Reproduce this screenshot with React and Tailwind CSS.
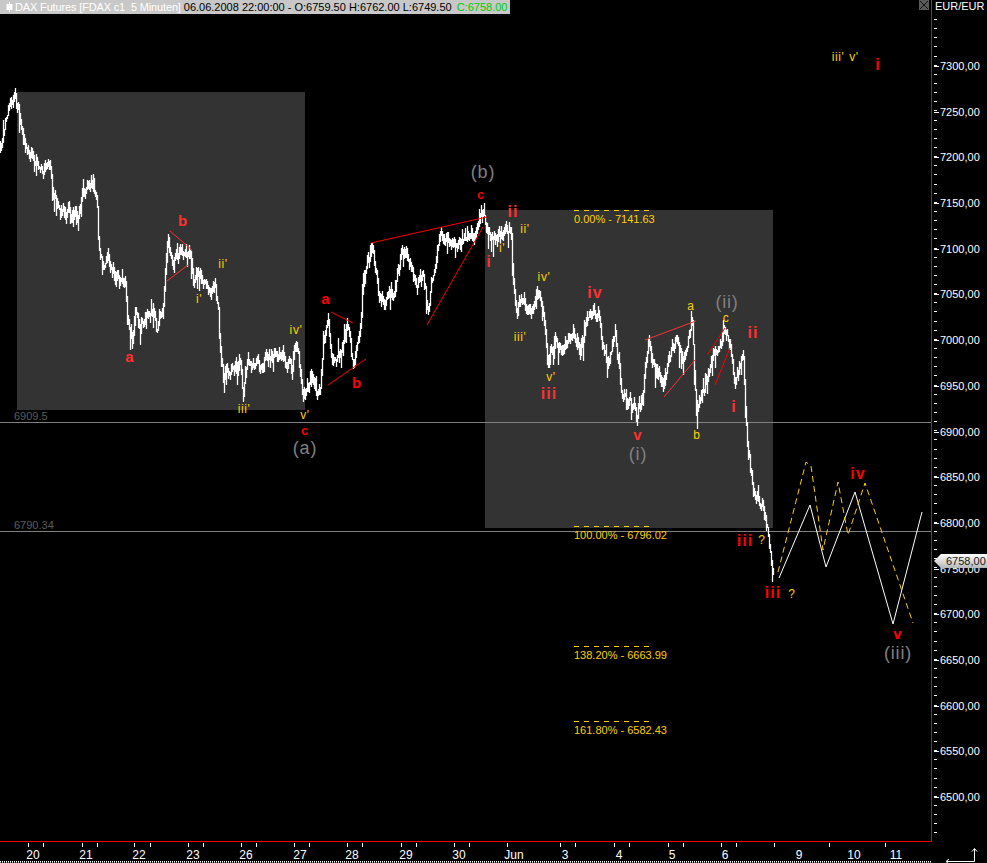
const KEYS = [
  [0,147],[5,125],[8,110],[14,97],[18,105],[21,125],[27,150],[35,165],[45,172],[50,163],[53,190],[60,208],[77,218],[83,197],[93,180],[97,207],[98,240],[103,267],[108,260],[113,273],[125,287],[127,317],[132,342],[135,310],[140,330],[147,310],[155,317],[157,330],[163,307],[165,277],[168,240],[173,262],[180,255],[190,250],[193,280],[200,275],[210,290],[215,280],[218,310],[220,350],[222,365],[223,375],[233,370],[240,365],[243,392],[248,365],[253,363],[260,365],[273,355],[292,365],[294,345],[297,342],[300,375],[303,402],[310,380],[320,395],[323,340],[328,315],[332,365],[340,355],
  [347,320],[353,365],[360,325],[363,285],[372,243],[378,290],[385,300],[393,295],[402,255],[408,260],[417,285],[423,275],[428,310],[433,275],[440,235],[453,248],[460,240],[473,237],[480,215],[484,212],[487,232],[497,238],[505,230],[511,235],[513,280],[517,310],[520,302],[532,308],[537,290],[543,312],[548,362],[555,340],[563,352],[573,335],[580,350],[590,310],[598,315],[603,345],[608,365],[615,335],[622,395],[630,400],[637,415],
  [642,400],[648,342],[653,365],[663,385],[675,340],[685,360],[692,322],[695,390],[697,415],[707,378],[712,355],[717,350],[726,330],[730,350],[735,385],[743,350],[745,410],[748,450],[752,480],[755,500],[763,505],[768,530],[773,570],
];

function pricePath() {
  let seed = 20080606;
  const rnd = () => {
    seed = (seed * 1664525 + 1013904223) >>> 0;
    return seed / 4294967296;
  };
  let d = "";
  let k = 0;
  let walk = 0;
  let prev = KEYS[0][1];
  for (let x = 0; x <= 773; x++) {
    while (k < KEYS.length - 2 && KEYS[k + 1][0] < x) k++;
    const [x0, y0] = KEYS[k];
    const [x1, y1] = KEYS[k + 1];
    const t = x1 === x0 ? 0 : Math.min(1, Math.max(0, (x - x0) / (x1 - x0)));
    const base = y0 + (y1 - y0) * t;
    walk = walk * 0.35 + (rnd() - 0.5) * 12;
    const c = base + Math.max(-6, Math.min(6, walk));
    let up = 1 + rnd() * 6;
    let dn = 1 + rnd() * 6;
    if (rnd() < 0.1) dn += 5 + rnd() * 9;
    if (rnd() < 0.08) up += 3 + rnd() * 6;
    const top = Math.round(Math.min(c - up, base, prev));
    const bot = Math.round(Math.max(c + dn, base, prev));
    d += `M${x + 0.5} ${top}V${bot}`;
    prev = c;
  }
  return d;
}

const RED = "#ff0000";
const RED2 = "#ff3030";
const YEL = "#ffd000";
const GRY = "#808080";

const YELLOW = [
  ["ii'",223,264],["i'",199,299],["iii'",244,409],["iv'",296,330],["v'",305,415],["i'",502,248],["ii'",525,229],["iv'",544,277],["iii'",520,337],["v'",551,377],
  ["a",691,306],["c",726,318],["b",697,435],["?",762,540],["?",792,594],["iii'",838,57],["v'",854,57],
];
const REDS = [
  ["a",130,357,RED2,15],["b",183,221,RED2,15],["c",305,430,RED,13],["a",326,299,RED,15],["b",357,383,RED,15],["c",481,194,RED,12],["ii",513,212,RED2,16],["i",489,262,RED2,16],["iii",549,394,RED2,16],["iv",595,293,RED2,16],["v",638,435,RED2,15],["ii",753,333,RED2,16],["i",734,407,RED2,16],["iii",745,541,RED,16],["iii",773,593,RED,16],["iv",858,474,RED,16],["v",898,634,RED,15],["i",878,65,RED,16],
];
const GRAYS = [["(a)",305,448],["(b)",483,172],["(i)",638,454],["(ii)",727,302],["(iii)",898,653]];
const THIN = [
  [170,231,192,250,RED2],[167,281,188,265,RED2],[331,312,353,323,RED],[328,385,366,359,RED],[371,243,487,217,RED],[427,325,483,227,RED],
  [645,340,696,321,RED2],[664,397,695,360,RED2],[708,354,725,328,RED],[715,385,730,348,RED],
];
const FIB = [
  [210,219,"0.00% - 7141.63"],[526,535,"100.00% - 6796.02"],[646,655,"138.20% - 6663.99"],[721,730,"161.80% - 6582.43"],
];
const PRICES = ["7300,00","7250,00","7200,00","7150,00","7100,00","7050,00","7000,00","6950,00","6900,00","6850,00","6800,00","6750,00","6700,00","6650,00","6600,00","6550,00","6500,00"];
const MINOR = Array.from({ length: 90 }, (_, i) => 19 + i * 9.14).filter((y) => y < 838);
const DAYS = [["20",33],["21",86],["22",139],["23",193],["26",246],["27",300],["28",352],["29",406],["30",459],["Jun",514],["3",565],["4",619],["5",672],["6",725],["9",799],["10",854],["11",896]];
const XTICKS = [28,43,82,97,134,150,188,203,241,256,294,309,347,362,401,416,454,469,507,560,575,614,629,668,683,721,736,774,829,885];

const SANS = { fontFamily: '"Liberation Sans", Arial, sans-serif' };

function Chart() {
  return (
    <svg width="931" height="841" viewBox="0 0 931 841" className="absolute left-0 top-0" style={SANS}>
      <rect x="17" y="92" width="288" height="318" fill="#333333" />
      <rect x="485" y="210" width="288" height="318" fill="#333333" />
      <line x1="0" y1="422.5" x2="931" y2="422.5" stroke={GRY} />
      <line x1="0" y1="531.5" x2="931" y2="531.5" stroke={GRY} />
      <text x="14" y="420" fontSize="11" fill="#5c5c5c">6909.5</text>
      <text x="14" y="529" fontSize="11" fill="#5c5c5c">6790.34</text>
      {FIB.map(([ly, ty, t]) => (
        <g key={t}>
          <line x1="574" y1={ly + 0.5} x2="650" y2={ly + 0.5} stroke={YEL} strokeDasharray="5 5" />
          <text x="574" y={ty + 4} fontSize="11" fill={YEL}>{t}</text>
        </g>
      ))}
      <path d={pricePath()} stroke="#ffffff" strokeWidth="1.3" fill="none" />
      {THIN.map(([a, b, c, d, col], i) => (
        <line key={i} x1={a} y1={b} x2={c} y2={d} stroke={col} strokeWidth="1" />
      ))}
      <polyline points="779,578 810,505 826,567 855,492 893,624 922,512" fill="none" stroke="#ffffff" strokeWidth="1" />
      <polyline points="778,572 806,462 811,466 823,550 838,482 848,535 865,483 913,623" fill="none" stroke={YEL} strokeWidth="1" strokeDasharray="6 4" />
      {YELLOW.map(([t, x, y], i) => (
        <text key={i} x={x} y={y + 4} textAnchor="middle" fontSize="12" letterSpacing="0.6" fill={YEL}>{t}</text>
      ))}
      {REDS.map(([t, x, y, col, s], i) => (
        <text key={i} x={x} y={y + 5} textAnchor="middle" fontSize={s} fontWeight="700" letterSpacing="1" fill={col}>{t}</text>
      ))}
      {GRAYS.map(([t, x, y]) => (
        <text key={t} x={x} y={y + 6} textAnchor="middle" fontSize="18" letterSpacing="0.8" fill={GRY}>{t}</text>
      ))}
    </svg>
  );
}

function PriceAxis() {
  return (
    <svg width="56" height="841" viewBox="931 0 56 841" className="absolute left-0 top-0" style={SANS}>
      <defs>
        <linearGradient id="tag" x1="0" y1="0" x2="0" y2="1">
          <stop offset="0" stopColor="#ffffff" />
          <stop offset="1" stopColor="#b8b8b8" />
        </linearGradient>
      </defs>
      {MINOR.map((y) => (
        <rect key={y} x="933" y={Math.round(y)} width="3" height="1" fill="#ffffff" />
      ))}
      {PRICES.map((p, i) => {
        const y = 66 + i * 45.69;
        return (
          <g key={p}>
            <rect x="933" y={Math.round(y)} width="5" height="1" fill="#ffffff" />
            <text x="939" y={Math.round(y) + 4} fontSize="11" fill="#ffffff">{p}</text>
          </g>
        );
      })}
      <polygon points="933,561 940,554 987,554 987,568 940,568" fill="url(#tag)" />
      <text x="945" y="565" fontSize="11" fill="#1a1a1a">6758,00</text>
    </svg>
  );
}

export default function App() {
  return (
    <div className="w-[987px] h-[863px] bg-black overflow-hidden flex flex-col font-['Liberation_Sans'] text-[11px] leading-none">
      <div className="flex h-[841px] shrink-0">
        <div className="relative w-[932px] h-[842px] border-r border-b border-[#ff0000]">
          <Chart />
          <div className="relative flex items-center w-[510px] h-[14px] bg-[#c8c8c8] whitespace-pre">
            <svg width="7" height="10" viewBox="0 0 7 10" className="ml-[6px] mr-[2px]">
              <rect x="0.5" y="2" width="6" height="6" fill="#ffffff" />
              <rect x="3" y="0" width="1" height="10" fill="#ffffff" />
            </svg>
            <span className="text-white tracking-[-0.15px]">DAX Futures [FDAX c1  5 Minuten]</span>
            <span className="ml-[3px] text-black">06.06.2008 22:00:00 - O:6759.50 H:6762.00 L:6749.50</span>
            <span className="ml-[5px] text-[#00cc00]">C:6758.00</span>
          </div>
          <div className="absolute right-[2px] top-0 w-[10px] h-[10px] bg-[#5a5a5a] flex items-center justify-center">
            <svg width="10" height="10" viewBox="0 0 10 10">
              <path d="M1 1L9 9M9 1L1 9" stroke="#111111" strokeWidth="1" />
            </svg>
          </div>
        </div>
        <div className="relative flex-1 text-white">
          <PriceAxis />
          <div className="relative pl-[3px] pt-[1px] h-[12px] leading-[11px]">EUR/EUR</div>
        </div>
      </div>
      <div className="relative flex flex-1">
        <svg width="987" height="22" viewBox="0 841 987 22" className="absolute left-0 top-0" style={SANS}>
          {XTICKS.map((x) => (
            <rect key={x} x={x} y="843" width="1" height="4" fill="#ffffff" />
          ))}
          {DAYS.map(([t, x]) => (
            <text key={t} x={x} y="859" textAnchor="middle" fontSize="12" fill="#ffffff">{t}</text>
          ))}
          <line x1="0" y1="861.5" x2="931" y2="861.5" stroke="#ffffff" strokeDasharray="1 1" />
          <line x1="0" y1="862.5" x2="931" y2="862.5" stroke="#9a9a9a" strokeDasharray="1 1" />
          <path d="M974.5 849V861.5H947M972 851.5L974.5 848.5L977 851.5M949 859L946 861.5L949 864" stroke="#ffffff" fill="none" />
        </svg>
      </div>
    </div>
  );
}
